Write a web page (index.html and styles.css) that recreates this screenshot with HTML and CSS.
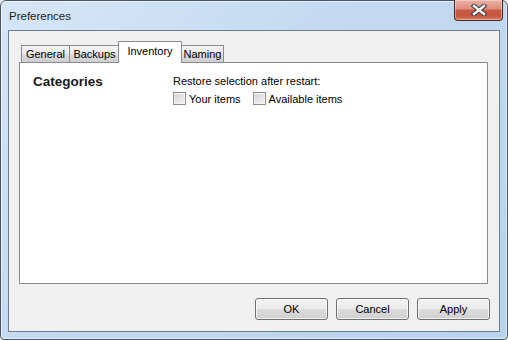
FILE: index.html
```html
<html>
  <head>
    <title>Preferences</title>
    <meta content="text/html;charset=utf-8" http-equiv="Content-Type">
    <link rel="stylesheet" href="styles.css">
  </head>
  <body>
    <div class="window">
      <div class="titlebar">
        <span class="title">Preferences</span>
        <div class="close">
          <svg width="16" height="12" viewBox="0 0 16 12">
            <path d="M3 2 L13 10 M13 2 L3 10" stroke="#3b3b3b" stroke-width="4.6" stroke-linecap="square"/>
            <path d="M3 2 L13 10 M13 2 L3 10" stroke="#ffffff" stroke-width="2.4" stroke-linecap="square"/>
          </svg>
        </div>
      </div>
      <div class="client">
        <div class="tabs">
          <div class="tab tab-general">General</div>
          <div class="tab tab-backups">Backups</div>
          <div class="tab tab-inventory selected">Inventory</div>
          <div class="tab tab-naming">Naming</div>
        </div>
        <div class="panel">
          <div class="section">Categories</div>
          <div class="options">
            <div class="label">Restore selection after restart:</div>
            <div class="checks">
              <label class="check"><span class="box"></span>Your items</label>
              <label class="check"><span class="box"></span>Available items</label>
            </div>
          </div>
        </div>
        <div class="buttons">
          <button>OK</button>
          <button>Cancel</button>
          <button>Apply</button>
        </div>
      </div>
    </div>
  </body>
</html>
```

FILE: styles.css
```css
* {
  box-sizing: border-box;
}
body {
  margin: 0;
  background: #ffffff;
  font-family: "Liberation Sans", Arial, sans-serif;
  font-size: 11px;
  color: #000;
}
.window {
  width: 508px;
  height: 340px;
  border: 1px solid #4b5563;
  border-radius: 6px 6px 4px 4px;
  background: linear-gradient(135deg, #d6e6f7 0%, #c3d9f0 45%, #b9d2ec 100%);
  box-shadow: inset 0 0 0 1px rgba(255, 255, 255, .55);
  padding: 0 7px 7px 7px;
  display: flex;
  flex-direction: column;
}
.titlebar {
  height: 29px;
  display: flex;
  justify-content: space-between;
  align-items: flex-start;
}
.title {
  font-size: 11.5px;
  color: #1c1c1c;
  margin-top: 9px;
  margin-left: 1px;
}
.close {
  width: 49px;
  height: 21px;
  margin-top: -1px;
  margin-right: -3px;
  border: 1px solid #4a2a26;
  border-top: none;
  border-radius: 0 0 4px 4px;
  background: linear-gradient(#eab0a4 0%, #dd8f80 45%, #c95a45 50%, #c8573f 80%, #d9806a 100%);
  box-shadow: inset 0 0 0 1px rgba(255, 255, 255, .35);
  display: flex;
  align-items: center;
  justify-content: center;
}
.client {
  flex: 1;
  border: 1px solid #6f7c8b;
  background: #f0f0f0;
  padding: 11px 9px 11px 10px;
  display: flex;
  flex-direction: column;
}
.tabs {
  display: flex;
  align-items: flex-end;
  height: 20px;
  padding-left: 2px;
  position: relative;
  z-index: 1;
}
.tab {
  height: 17px;
  border: 1px solid #898c95;
  border-bottom: none;
  background: linear-gradient(#f3f3f3 0%, #ebebeb 50%, #dddddd 51%, #cfcfcf 100%);
  text-align: center;
  line-height: 17px;
  margin-right: -1px;
}
.tab-general { width: 49px; }
.tab-backups { width: 51px; }
.tab-inventory { width: 64px; }
.tab-naming { width: 43px; }
.tab.selected {
  height: 22px;
  margin-bottom: -1px;
  background: #ffffff;
  line-height: 18px;
  margin-left: -1px;
  margin-right: -1px;
  position: relative;
  z-index: 2;
}
.panel {
  flex: 1;
  background: #ffffff;
  border: 1px solid #898c95;
  margin-right: 2px;
  padding: 11px 13px;
  display: grid;
  grid-template-columns: 140px 1fr;
  align-content: start;
}
.section {
  font-weight: bold;
  font-size: 13.5px;
  color: #1a1a1a;
}
.label {
  line-height: 14px;
}
.checks {
  display: flex;
  gap: 12px;
  margin-top: 4px;
}
.check {
  display: flex;
  align-items: center;
  gap: 3px;
}
.box {
  width: 13px;
  height: 13px;
  border: 1px solid #8e8f8f;
  background: linear-gradient(135deg, #cfcfcf 0%, #e6e6e6 55%, #f8f8f8 100%);
  box-shadow: inset 0 0 0 1px #f4f4f4;
}
.buttons {
  display: flex;
  justify-content: flex-end;
  gap: 8px;
  margin-top: 14px;
}
.buttons button {
  width: 73px;
  height: 22px;
  border: 1px solid #707070;
  border-radius: 3px;
  background: linear-gradient(#f2f2f2 0%, #ebebeb 50%, #dddddd 51%, #cfcfcf 100%);
  box-shadow: inset 0 0 0 1px rgba(255, 255, 255, .7);
  font-family: "Liberation Sans", Arial, sans-serif;
  font-size: 11px;
  color: #000;
  padding: 0;
}
```
